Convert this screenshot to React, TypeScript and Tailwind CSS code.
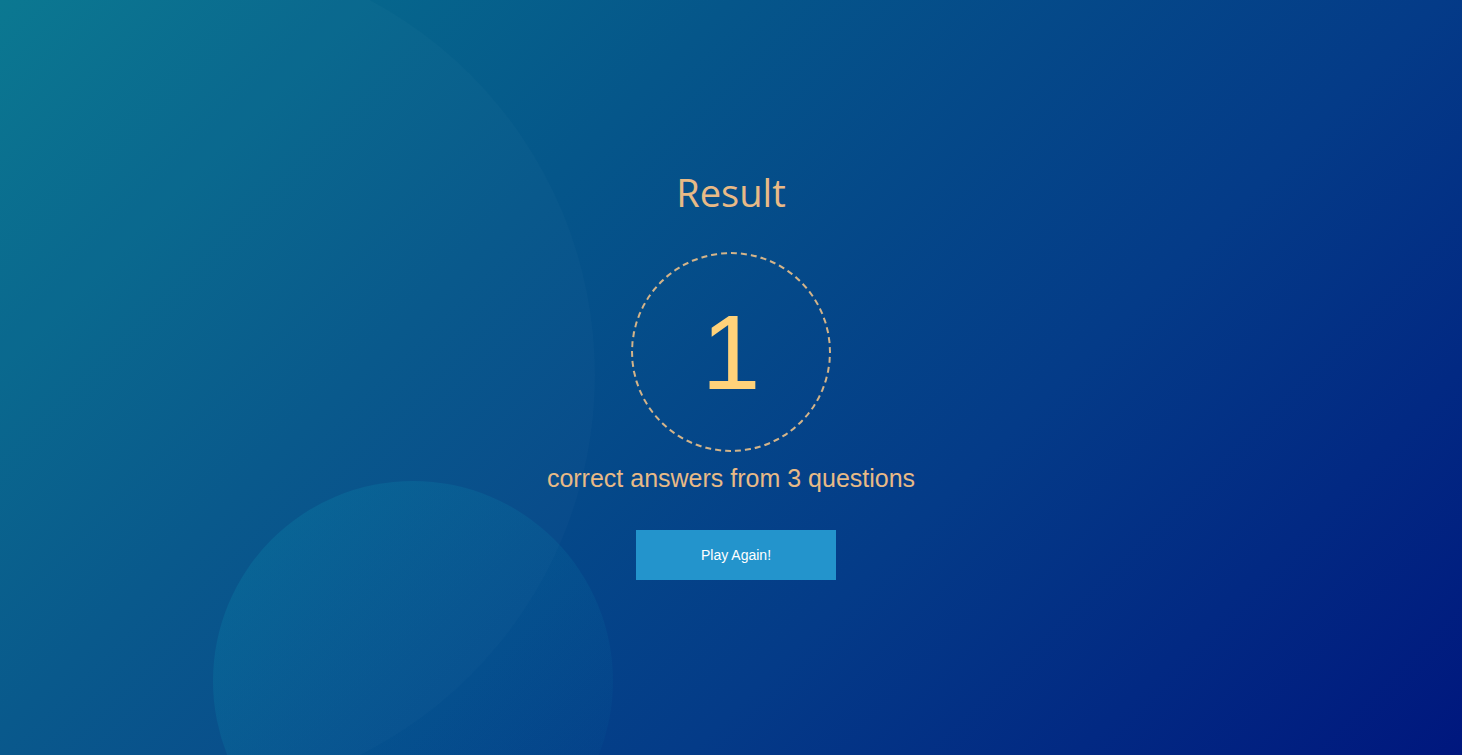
export default function App() {
  return (
    <div className="relative h-screen w-full overflow-hidden bg-[linear-gradient(135deg,#07768f_0%,#05568a_33%,#043b88_65%,#00177e_100%)]">
      {/* BIG CIRCLE */}
      <div className="absolute left-[-255px] top-[-50px] h-[850px] w-[850px] rounded-full bg-white/[0.02]" />

      {/* SMALL CIRCLE */}
      <div className="absolute left-[213px] top-[481px] h-[400px] w-[400px] rounded-full bg-linear-to-br from-[#0a8cb0]/30 to-[#0a5aa0]/0" />

      <div className="relative flex flex-col items-center pt-[167px]">
        <h1
          className="text-[38px] leading-[50px] text-[#e8ba86]"
          style={{ fontFamily: '"Open Sans", sans-serif' }}
        >
          Result
        </h1>

        <div className="mt-[35px] flex h-[200px] w-[200px] items-center justify-center rounded-full border-2 border-dashed border-[#d4b489]">
          <span
            className="text-[106px] leading-none text-[#ffd27a]"
            style={{ fontFamily: '"Liberation Sans", Arial, sans-serif' }}
          >
            1
          </span>
        </div>

        <p
          className="mt-[11px] text-[25px] leading-[30px] text-[#e8ba86]"
          style={{ fontFamily: '"Liberation Sans", Arial, sans-serif' }}
        >
          correct answers from 3 questions
        </p>

        <button
          className="ml-[10px] mt-[37px] h-[50px] w-[200px] bg-[#2394cc] text-[14px] text-white"
          style={{ fontFamily: '"Liberation Sans", Arial, sans-serif' }}
        >
          Play Again!
        </button>
      </div>
    </div>
  );
}
